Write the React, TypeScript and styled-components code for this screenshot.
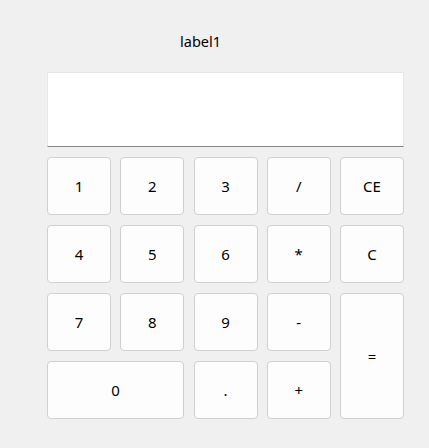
import React from "react";
import styled, { createGlobalStyle } from "styled-components";

const Global = createGlobalStyle`
  html, body {
    margin: 0;
    padding: 0;
    background: #f0f0f0;
  }
  body {
    font-family: "Noto Sans", "Open Sans", sans-serif;
    color: #000;
  }
`;

const Window = styled.div`
  box-sizing: border-box;
  width: 429px;
  height: 448px;
  padding: 31px 0 0 47px;
  background: #f0f0f0;
`;

const Column = styled.div`
  width: 357px;
  display: flex;
  flex-direction: column;
`;

const Label = styled.div`
  padding-left: 133px;
  height: 20px;
  line-height: 20px;
  font-size: 14.5px;
  color: #000;
`;

const Display = styled.div`
  box-sizing: border-box;
  margin-top: 21px;
  height: 75px;
  background: #ffffff;
  border: 1px solid #e6e6e6;
  border-bottom: 1px solid #868686;
`;

const Keypad = styled.div`
  margin-top: 10px;
  display: grid;
  grid-template-columns: repeat(5, 1fr);
  grid-auto-rows: 58px;
  column-gap: 9.25px;
  row-gap: 10px;
`;

const Key = styled.button<{ $wide?: boolean; $tall?: boolean }>`
  box-sizing: border-box;
  margin: 0;
  padding: 0;
  background: #fdfdfd;
  border: 1px solid #d0d0d0;
  border-radius: 4px;
  font-family: "Noto Sans", "Open Sans", sans-serif;
  font-size: 15px;
  color: #000;
  display: flex;
  align-items: center;
  justify-content: center;
  grid-column: ${(p) => (p.$wide ? "span 2" : "auto")};
  grid-row: ${(p) => (p.$tall ? "span 2" : "auto")};
`;

const keys: { t: string; wide?: boolean; tall?: boolean }[] = [
  { t: "1" }, { t: "2" }, { t: "3" }, { t: "/" }, { t: "CE" },
  { t: "4" }, { t: "5" }, { t: "6" }, { t: "*" }, { t: "C" },
  { t: "7" }, { t: "8" }, { t: "9" }, { t: "-" }, { t: "=", tall: true },
  { t: "0", wide: true }, { t: "." }, { t: "+" },
];

export default function App() {
  return (
    <>
      <Global />
      <Window>
        <Column>
          <Label>label1</Label>
          <Display />
          <Keypad>
            {keys.map((k) => (
              <Key key={k.t} $wide={k.wide} $tall={k.tall}>
                {k.t}
              </Key>
            ))}
          </Keypad>
        </Column>
      </Window>
    </>
  );
}
